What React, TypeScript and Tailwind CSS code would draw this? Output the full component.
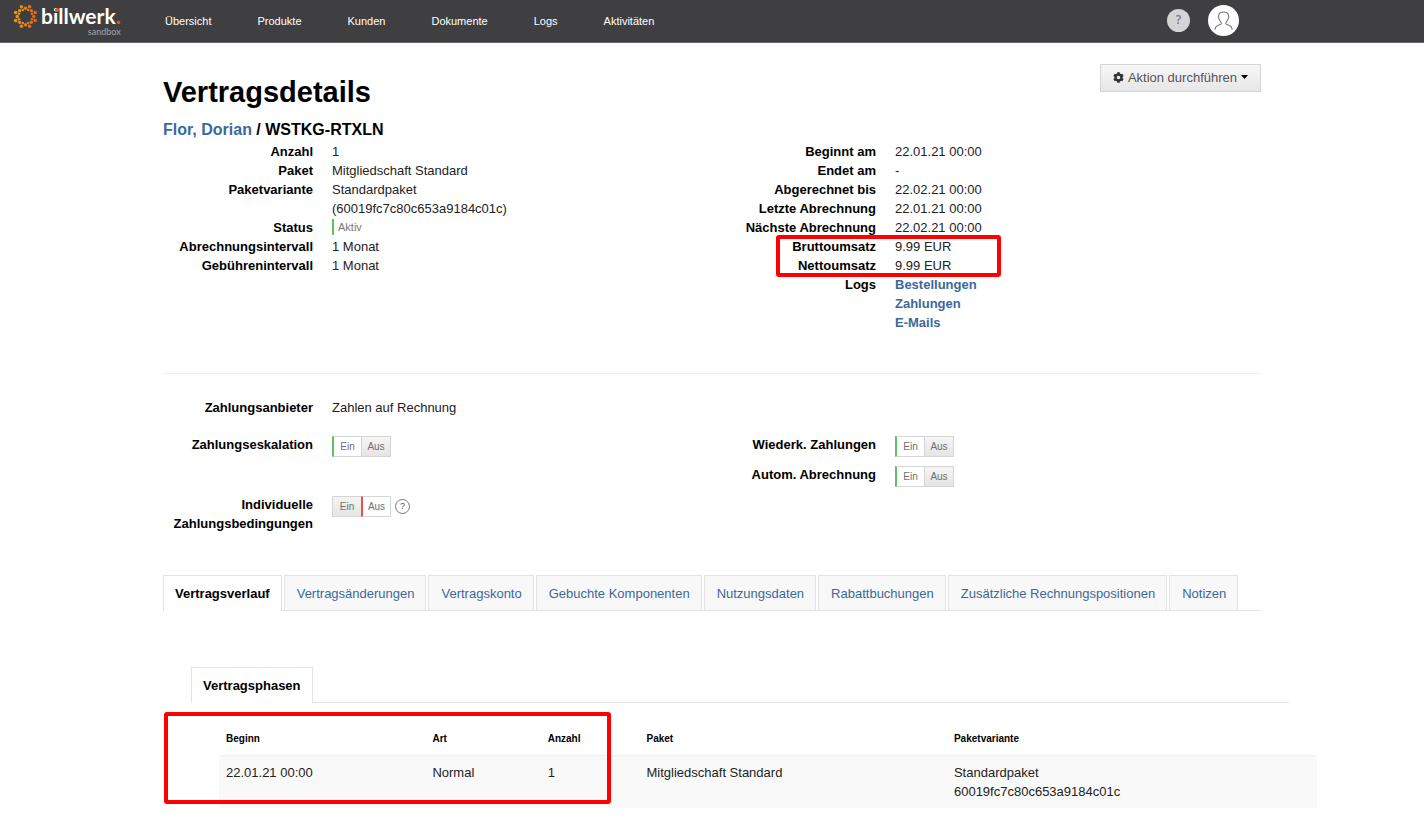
import React from "react";
import { FaCog } from "react-icons/fa";

const navItems = ["Übersicht", "Produkte", "Kunden", "Dokumente", "Logs", "Aktivitäten"];

const tabs = [
  "Vertragsverlauf",
  "Vertragsänderungen",
  "Vertragskonto",
  "Gebuchte Komponenten",
  "Nutzungsdaten",
  "Rabattbuchungen",
  "Zusätzliche Rechnungspositionen",
  "Notizen",
];

function LogoMark() {
  const angles = [0, 45, 90, 135, 180, 225, 270, 315];
  return (
    <svg width="25" height="25" viewBox="-12.5 -12.5 25 25" aria-hidden="true">
      <defs>
        <linearGradient id="mark" gradientUnits="userSpaceOnUse" x1="-12" y1="0" x2="12" y2="0">
          <stop offset="0" stopColor="#f59c00" />
          <stop offset="1" stopColor="#ea5b0c" />
        </linearGradient>
      </defs>
      <g fill="url(#mark)">
        {angles.map((a) => {
          const dot = (deg: number, r: number) => {
            const t = ((a + deg) * Math.PI) / 180;
            return { cx: r * Math.cos(t), cy: r * Math.sin(t) };
          };
          return (
            <g key={a}>
              <circle {...dot(22.5, 10.6)} r="1.8" />
              <circle {...dot(0, 8.3)} r="1.7" />
              <circle {...dot(22.5, 7)} r="1.3" />
            </g>
          );
        })}
      </g>
    </svg>
  );
}

function Logo() {
  return (
    <a href="#" className="flex w-[152px] items-start pt-1 pl-[13px] text-white">
      <LogoMark />
      <span className="relative ml-[3px] flex flex-col items-end">
        <span className="font-[Lato] text-[21px] leading-6 font-bold">
          billwerk<span className="text-[#ea5b0c]">.</span>
        </span>
        <span className="font-[Lato] text-[9px] leading-2 text-[#a5a5a7]">sandbox</span>
        <span className="absolute top-1 left-[14px] size-1 rounded-full bg-[#ea5b0c]" />
      </span>
    </a>
  );
}

function Header() {
  return (
    <header className="flex h-[43px] border-b border-[#6a6a6c] bg-[#3f3f41]">
      <Logo />
      <nav className="flex items-center gap-[46px] pl-[13px] text-[11px] text-white">
        {navItems.map((item) => (
          <a key={item} href="#">
            {item}
          </a>
        ))}
      </nav>
      <div className="mr-[185px] ml-auto flex items-center gap-[18px] pb-[2px]">
        <button
          type="button"
          aria-label="Hilfe"
          className="size-[23px] rounded-full bg-[#d4d4d4] font-['Open_Sans'] text-xs font-semibold text-[#7b7b7d]"
        >
          ?
        </button>
        <button type="button" aria-label="Benutzerkonto" className="size-[31px] rounded-full bg-white">
          <svg width="31" height="31" viewBox="0 0 31 31" fill="none" stroke="#77777a" strokeWidth="1.1">
            <path d="M7 24.5c.3-2.900 1.500-3.600 3.400-4.200 1.700-.5 2.900-.9 3.100-1.900.1-.9-.9-1.700-1.600-2.700-.7-1-.7-2-1.200-2.600-.5-.6-.4-1.500 0-2C10.700 8.200 12.500 7 15.600 7s4.900 1.200 4.900 4.100c.4.500.5 1.400 0 2-.5.600-.5 1.600-1.200 2.600-.7 1-1.700 1.800-1.600 2.700.2 1 1.400 1.400 3.100 1.900 1.900.600 3.100 1.300 3.400 4.200" />
          </svg>
        </button>
      </div>
    </header>
  );
}

function Row({ label, children }: { label: string; children: React.ReactNode }) {
  return (
    <div className="flex gap-[19px]">
      <dt className="w-[150px] shrink-0 text-right font-bold text-black">{label}</dt>
      <dd>{children}</dd>
    </div>
  );
}

function Toggle({ label, on }: { label: string; on: boolean }) {
  const idle = "border border-[#d5d5d5] bg-linear-to-b from-[#f5f5f5] to-[#e5e5e5]";
  return (
    <div
      role="group"
      aria-label={label}
      className="mt-px flex h-[21px] text-[10px] leading-[19px] text-[#6f6f6f]"
    >
      <button
        type="button"
        aria-pressed={on}
        className={`w-[29px] ${on ? "border-y border-l-2 border-y-[#d5d5d5] border-l-[#5cc268] bg-white" : idle + " border-r-0"}`}
      >
        Ein
      </button>
      <button
        type="button"
        aria-pressed={!on}
        className={`w-[30px] ${on ? idle : "border border-l-2 border-[#d5d5d5] border-l-[#ef4e4e] bg-white"}`}
      >
        Aus
      </button>
    </div>
  );
}

function Highlight({ className }: { className: string }) {
  return (
    <div className={`pointer-events-none absolute rounded-[3px] border-4 border-[#ff0000] ${className}`} />
  );
}

export default function App() {
  return (
    <div className="min-h-screen overflow-x-hidden bg-white font-['Liberation_Sans',Arial,sans-serif] text-[13px] leading-[19px] text-[#222]">
      <Header />
      <main className="mx-auto max-w-[1098px] pb-8">
        <div className="flex items-start justify-between pt-[21px]">
          <h1 className="pt-2 text-[29px] leading-10 font-bold text-black">Vertragsdetails</h1>
          <button
            type="button"
            className="flex h-7 items-center border border-[#d5d5d5] bg-linear-to-b from-[#f7f7f7] to-[#e6e6e6] px-3 pb-[2px] text-[#555]"
          >
            <FaCog className="mr-1 size-[11px] text-[#333]" />
            Aktion durchführen
            <svg className="ml-1" width="7" height="4" viewBox="0 0 7 4">
              <path d="M0 0h7L3.500 4z" fill="#000" />
            </svg>
          </button>
        </div>
        <h2 className="pt-2 pb-[2px] text-base leading-5 font-bold text-black">
          <a href="#" className="text-[#3b689c]">
            Flor, Dorian
          </a>{" "}
          / WSTKG-RTXLN
        </h2>

        <section className="grid grid-cols-2 gap-7 border-b border-[#eee] pb-[41px]">
          <dl>
            <Row label="Anzahl">1</Row>
            <Row label="Paket">Mitgliedschaft Standard</Row>
            <Row label="Paketvariante">
              Standardpaket
              <br />
              (60019fc7c80c653a9184c01c)
            </Row>
            <Row label="Status">
              <span className="mt-px block border-l-2 border-[#5cc268] pl-1 text-[11px] leading-4 text-[#777]">
                Aktiv
              </span>
            </Row>
            <Row label="Abrechnungsintervall">1 Monat</Row>
            <Row label="Gebührenintervall">1 Monat</Row>
          </dl>
          <dl>
            <Row label="Beginnt am">22.01.21 00:00</Row>
            <Row label="Endet am">-</Row>
            <Row label="Abgerechnet bis">22.02.21 00:00</Row>
            <Row label="Letzte Abrechnung">22.01.21 00:00</Row>
            <Row label="Nächste Abrechnung">22.02.21 00:00</Row>
            <div className="relative">
              <Row label="Bruttoumsatz">9.99 EUR</Row>
              <Row label="Nettoumsatz">9.99 EUR</Row>
              <Highlight className="-inset-y-[2px] left-[50px] w-[225px]" />
            </div>
            <Row label="Logs">
              {["Bestellungen", "Zahlungen", "E-Mails"].map((log) => (
                <a key={log} href="#" className="block font-bold text-[#3b689c]">
                  {log}
                </a>
              ))}
            </Row>
          </dl>
        </section>

        <section className="pt-6">
          <dl>
            <Row label="Zahlungsanbieter">Zahlen auf Rechnung</Row>
          </dl>
          <div className="grid grid-cols-2 gap-7 pt-[18px]">
            <dl className="space-y-[38px]">
              <Row label="Zahlungseskalation">
                <Toggle label="Zahlungseskalation" on />
              </Row>
              <Row label="Individuelle Zahlungsbedingungen">
                <div className="flex items-center gap-1">
                  <Toggle label="Individuelle Zahlungsbedingungen" on={false} />
                  <button
                    type="button"
                    aria-label="Hilfe"
                    className="size-[15px] rounded-full border border-[#777] text-[9px] leading-[13px] text-[#555]"
                  >
                    ?
                  </button>
                </div>
              </Row>
            </dl>
            <dl className="space-y-2">
              <Row label="Wiederk. Zahlungen">
                <Toggle label="Wiederk. Zahlungen" on />
              </Row>
              <Row label="Autom. Abrechnung">
                <Toggle label="Autom. Abrechnung" on />
              </Row>
            </dl>
          </div>
        </section>

        <div role="tablist" className="mt-[42px] flex gap-[2px] border-b border-[#e3e3e3]">
          {tabs.map((tab, i) => (
            <button
              key={tab}
              type="button"
              role="tab"
              aria-selected={i === 0}
              className={
                i === 0
                  ? "-mb-px h-9 border border-b-0 border-[#e3e3e3] bg-white px-[11px] pb-px font-bold text-black"
                  : "h-[35px] border border-b-0 border-[#e3e3e3] bg-[#f8f8f8] pr-[11px] pl-3 text-[#3b689c]"
              }
            >
              {tab}
            </button>
          ))}
        </div>

        <section className="mt-14 -mr-7 ml-7">
          <div role="tablist" className="flex border-b border-[#e3e3e3]">
            <button
              type="button"
              role="tab"
              aria-selected
              className="-mb-px h-9 border border-b-0 border-[#e3e3e3] bg-white px-[11px] pb-px font-bold text-black"
            >
              Vertragsphasen
            </button>
          </div>
          <div className="relative -mr-7 ml-7 pt-[18px]">
            <table className="w-full table-fixed text-left">
              <thead className="text-[10px] text-black">
                <tr className="h-[34px]">
                  <th className="w-[18.8%] px-[7px] pt-[2px]">Beginn</th>
                  <th className="w-[10.5%] px-[7px] pt-[2px]">Art</th>
                  <th className="w-[9%] px-[7px] pt-[2px]">Anzahl</th>
                  <th className="w-[28%] px-[7px] pt-[2px]">Paket</th>
                  <th className="px-[7px] pt-[2px]">Paketvariante</th>
                </tr>
              </thead>
              <tbody>
                <tr className="border-t border-[#f0f0f0] bg-[#f9f9f9] align-top">
                  <td className="px-[7px] py-[7px]">22.01.21 00:00</td>
                  <td className="px-[7px] py-[7px]">Normal</td>
                  <td className="px-[7px] py-[7px]">1</td>
                  <td className="px-[7px] py-[7px]">Mitgliedschaft Standard</td>
                  <td className="px-[7px] py-[7px]">
                    Standardpaket
                    <br />
                    60019fc7c80c653a9184c01c
                  </td>
                </tr>
              </tbody>
            </table>
            <Highlight className="top-[9px] -left-[55px] h-[92px] w-[447px]" />
          </div>
        </section>
      </main>
    </div>
  );
}
